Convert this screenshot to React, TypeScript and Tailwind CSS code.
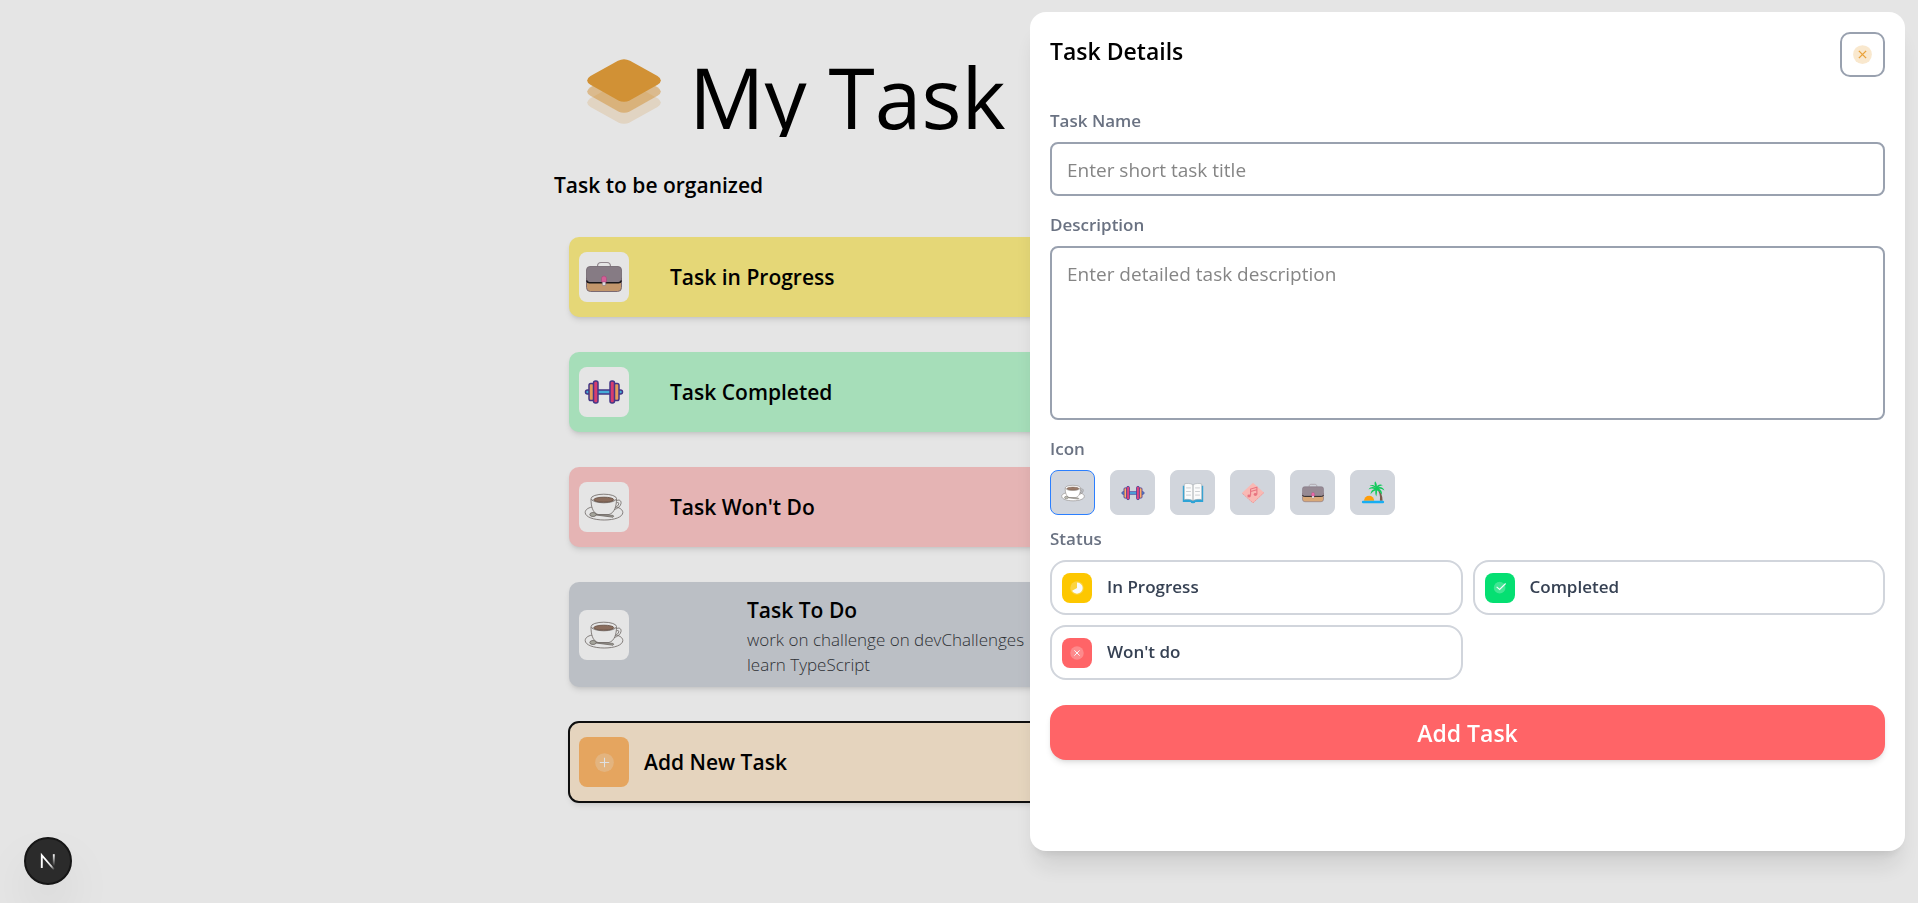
import { useState } from "react";
import type { ReactNode } from "react";

type IconProps = { className?: string };

function LogoIcon({ className }: IconProps) {
  const layer =
    "M92 5Q110 -4 128 5L210 51Q230 64 210 77L128 123Q110 132 92 123L10 77Q-10 64 10 51Z";
  return (
    <svg className={className} viewBox="0 0 220 194" fill="#E9A23B" aria-hidden="true">
      <path d={layer} transform="translate(0 66)" opacity="0.2" />
      <path d={layer} transform="translate(0 33)" opacity="0.5" />
      <path d={layer} />
    </svg>
  );
}

function BriefcaseIcon({ className }: IconProps) {
  return (
    <svg className={className} viewBox="0 0 40 40" fill="none" aria-hidden="true">
      <path d="M13.5 9.500c0-3 1.500-4 3.500-4h6c2 0 3.500 1 3.500 4" stroke="#a3989f" strokeWidth="1.200" />
      <path d="M2.500 21h35v9.500a4 4 0 0 1-4 4h-27a4 4 0 0 1-4-4z" fill="#d8a878" stroke="#8a7680" />
      <path
        d="M6 9.500h28a3.500 3.500 0 0 1 3.500 3.500v9.500a3 3 0 0 1-3 3h-29a3 3 0 0 1-3-3V13A3.500 3.500 0 0 1 6 9.500z"
        fill="#968a94"
        stroke="#7c6e7a"
        strokeWidth="0.800"
      />
      <path d="M2.500 23.500c.5 1.500 1.500 2.200 3 2.200h29c1.500 0 2.500-.7 3-2.200" stroke="#1c1a1f" strokeWidth="1.400" />
      <rect x="18.300" y="23.500" width="3.400" height="5" rx="1" fill="#f7f3f6" stroke="#7c6e7a" strokeWidth="0.500" />
      <path d="M17.500 21.500a2.500 2.500 0 0 1 5 0V25h-5z" fill="#ec69a8" stroke="#b04a80" strokeWidth="0.500" />
    </svg>
  );
}

function DumbbellIcon({ className }: IconProps) {
  return (
    <svg className={className} viewBox="0 0 40 40" stroke="#4c3d96" strokeWidth="1.500" aria-hidden="true">
      <rect x="1.500" y="18" width="37" height="4" rx="2" fill="#4cc0f0" />
      <rect x="5" y="11.500" width="5" height="17" rx="1.800" fill="#ffae66" />
      <rect x="30" y="11.500" width="5" height="17" rx="1.800" fill="#ffae66" />
      <rect x="9.500" y="9" width="4.500" height="22" rx="2" fill="#f0437c" />
      <rect x="26" y="9" width="4.500" height="22" rx="2" fill="#f0437c" />
    </svg>
  );
}

function CoffeeIcon({ className }: IconProps) {
  return (
    <svg
      className={className}
      viewBox="0 0 40 40"
      fill="#ffffff"
      stroke="#77706c"
      strokeWidth="0.800"
      strokeLinejoin="round"
      aria-hidden="true"
    >
      <path d="M8 20C3.500 21 1.200 23 1.200 25.500c0 4.500 8.500 7.500 19 7.500s18.600-3 18.600-7.500c0-2.500-2.500-4.500-6.500-5.500z" />
      <path d="M32 14c3-2 5.500-.5 5 2.500s-3.500 5-7 6.200" fill="none" />
      <path d="M32.500 16c1.500-1 2.500-.5 2.200 1s-1.700 2.500-3.400 3.500" fill="none" />
      <path d="M7 12c0 7 1.500 14 7 15.500h11c5.500-1.500 7.500-8.500 7.500-15.500" />
      <ellipse cx="19.800" cy="11.500" rx="12.700" ry="4.300" />
      <ellipse cx="19.800" cy="12.700" rx="10" ry="2.500" fill="#9a7a68" stroke="#6b5244" />
      <ellipse cx="9" cy="27.500" rx="3.200" ry="2" fill="#b8b8ae" />
      <path d="M12 28l17 2.200c.8-.6.8-1.400 0-1.800L12 27.500" fill="#b8b8ae" />
    </svg>
  );
}

function BookIcon({ className }: IconProps) {
  return (
    <svg className={className} viewBox="0 0 40 40" fill="none" aria-hidden="true">
      <path d="M3 8h34v27H24a4 2 0 0 1-8 0H3z" fill="#2da3d6" />
      <path
        d="M20 6.500C16 3.500 9 3.500 5.500 5v26c4-1 11-.5 14.500 2 3.500-2.500 10.500-3 14.500-2V5C31 3.500 24 3.500 20 6.500z"
        fill="#fbfbfb"
        stroke="#a4abb0"
      />
      <path d="M20 6.500V33" stroke="#8d9499" strokeWidth="1.300" />
      <path
        d="M8.500 11.500h8M8.500 17.500h8M8.500 23.500h8M23.500 11.500h8M23.500 17.500h8M23.500 23.500h8"
        stroke="#bfc4c8"
        strokeWidth="1.300"
      />
    </svg>
  );
}

function MusicIcon({ className }: IconProps) {
  return (
    <svg className={className} viewBox="0 0 40 40" fill="none" aria-hidden="true">
      <path d="M20 3l18.500 16.500L20 37 1.500 20z" fill="#f9b9b4" />
      <path d="M2.500 21L20 36.500 38 19.500" stroke="#e98f90" strokeWidth="1.200" strokeDasharray="3 1.500" />
      <path d="M16 24V13.500l10.500-3V22M16 17.500l10.500-3" stroke="#e87480" strokeWidth="1.800" />
      <ellipse cx="13.500" cy="25" rx="2.900" ry="2.300" fill="#e87480" />
      <ellipse cx="24" cy="22.500" rx="2.900" ry="2.300" fill="#e87480" />
    </svg>
  );
}

function IslandIcon({ className }: IconProps) {
  return (
    <svg className={className} viewBox="0 0 40 40" fill="none" aria-hidden="true">
      <path d="M5 33a8.500 8.500 0 0 1 17 0z" fill="#ff9d0a" />
      <path d="M25.500 12c5 5 7 12 6 21h4.500c0-9-3-16-9.500-21z" fill="#7a5a4a" />
      <path
        d="M25 12c-4-3-9-3-12.500 2 4-2 7-2 10-.5-4 1-6.500 4-6.500 9 2-3.500 4.500-5.500 8-6.500-.5 3.500-.2 7 1.500 10 .8-4 1.500-7 1-10 3.500 1 6.500 3.500 8.500 7 .5-5-1.500-8.500-5-10 3 0 6 .5 9 3-1.500-5-6-7-10.500-5.500 2-2 4.500-3 8-3-4-3-8-1.500-10 1.500 0-3-.5-6-3-8.500-1.500 3-1 6 .5 8.500-2.500-2-6-3-9.500-1.500 4 .5 8 2 10.500 4.500z"
        fill="#12c95b"
      />
      <rect x="1.500" y="33" width="37" height="4" rx="2" fill="#18aef2" />
    </svg>
  );
}

function CloseRingIcon({ className, color }: IconProps & { color: string }) {
  return (
    <svg className={className} viewBox="0 0 24 24" fill="none" aria-hidden="true">
      <circle cx="12" cy="12" r="9" fill={color} fillOpacity="0.25" />
      <path d="M8.500 8.500l7 7M15.500 8.500l-7 7" stroke={color} strokeWidth="1.300" />
    </svg>
  );
}

function AddRingIcon({ className }: IconProps) {
  return (
    <svg className={className} viewBox="0 0 24 24" fill="none" aria-hidden="true">
      <circle cx="12" cy="12" r="9" fill="#F8FAFC" fillOpacity="0.25" />
      <path d="M12 7.500v9M16.500 12h-9" stroke="#F8FAFC" />
    </svg>
  );
}

function TimeIcon({ className }: IconProps) {
  return (
    <svg className={className} viewBox="0 0 24 24" fill="none" aria-hidden="true">
      <circle cx="12" cy="12" r="9" fill="#F8FAFC" fillOpacity="0.25" />
      <path d="M12 4.500A7.500 7.500 0 1 1 5.500 15.750L12 12z" fill="#F8FAFC" />
    </svg>
  );
}

function DoneIcon({ className }: IconProps) {
  return (
    <svg className={className} viewBox="0 0 24 24" fill="none" aria-hidden="true">
      <circle cx="11.500" cy="11.500" r="7.800" fill="#F8FAFC" fillOpacity="0.25" />
      <path d="M7.500 10.500l4 3.500 8-8" stroke="#F8FAFC" strokeWidth="1.500" />
    </svg>
  );
}

function FrameworkLogo({ className }: IconProps) {
  return (
    <svg className={className} viewBox="0 0 40 40" fill="none" aria-hidden="true">
      <defs>
        <linearGradient id="diag" x1="18" y1="20" x2="26" y2="29" gradientUnits="userSpaceOnUse">
          <stop stopColor="#fff" />
          <stop offset="0.600" stopColor="#fff" stopOpacity="0.800" />
          <stop offset="1" stopColor="#fff" stopOpacity="0" />
        </linearGradient>
        <linearGradient id="stem" x1="0" y1="13" x2="0" y2="25" gradientUnits="userSpaceOnUse">
          <stop stopColor="#fff" />
          <stop offset="1" stopColor="#fff" stopOpacity="0" />
        </linearGradient>
      </defs>
      <path d="M13.800 27V14.200L26.500 29" stroke="url(#diag)" strokeWidth="1.900" />
      <path d="M25.800 13.200v13" stroke="url(#stem)" strokeWidth="1.900" />
    </svg>
  );
}

const cards = [
  { title: "Task in Progress", color: "bg-yellow-200", icon: <BriefcaseIcon className="size-10" /> },
  { title: "Task Completed", color: "bg-green-200", icon: <DumbbellIcon className="size-10" /> },
  { title: "Task Won't Do", color: "bg-red-200", icon: <CoffeeIcon className="size-10" /> },
];

const taskIcons = [
  { name: "Coffee", icon: <CoffeeIcon className="size-6" /> },
  { name: "Exercise", icon: <DumbbellIcon className="size-6" /> },
  { name: "Reading", icon: <BookIcon className="size-6" /> },
  { name: "Music", icon: <MusicIcon className="size-6" /> },
  { name: "Work", icon: <BriefcaseIcon className="size-6" /> },
  { name: "Travel", icon: <IslandIcon className="size-6" /> },
];

const statuses = [
  { name: "In Progress", color: "bg-[#fdc700]", icon: <TimeIcon className="size-[18px]" /> },
  { name: "Completed", color: "bg-[#05df72]", icon: <DoneIcon className="size-[18px]" /> },
  { name: "Won't do", color: "bg-[#ff6467]", icon: <CloseRingIcon className="size-[18px]" color="#F8FAFC" /> },
];

function IconTile({ children, color = "bg-white" }: { children: ReactNode; color?: string }) {
  return (
    <span className={`flex size-[50px] shrink-0 items-center justify-center rounded-lg ${color}`}>
      {children}
    </span>
  );
}

function Board() {
  return (
    <main className="mx-auto flex w-full max-w-[810px] flex-col pt-[49px]">
      <header className="flex h-[88px] items-start gap-7 overflow-hidden pl-[33px]">
        <LogoIcon className="mt-[10px] h-[65px] w-[74px] shrink-0" />
        <h1 className="text-[84px] leading-[96px] whitespace-nowrap">My Task</h1>
      </header>
      <h2 className="mt-8 text-[21px] leading-8 font-semibold">Task to be organized</h2>
      <div className="mt-9 flex flex-col gap-[35px] px-[15px]">
        {cards.map((card) => (
          <article
            key={card.title}
            className={`flex h-20 items-center gap-[41px] rounded-[10px] px-[10px] shadow-md ${card.color}`}
          >
            <IconTile>{card.icon}</IconTile>
            <h3 className="text-[21px] leading-8 font-semibold">{card.title}</h3>
          </article>
        ))}
        <article className="flex items-center gap-[118px] rounded-[10px] bg-gray-300 p-[10px] shadow-md">
          <IconTile>
            <CoffeeIcon className="size-10" />
          </IconTile>
          <div>
            <h3 className="pt-[2px] text-[21px] leading-8 font-semibold">Task To Do</h3>
            <p className="mt-px text-[17px] leading-[25px] font-light text-[#33363b]">
              work on challenge on devChallenges
              <br />
              learn TypeScript
            </p>
          </div>
        </article>
        <button
          type="button"
          className="flex h-20 items-center gap-[15px] rounded-[10px] bg-orange-100 px-[10px] shadow-md outline-2 -outline-offset-1 outline-[#101010]"
        >
          <IconTile color="bg-orange-300">
            <AddRingIcon className="size-[25px]" />
          </IconTile>
          <span className="text-[21px] leading-8 font-semibold">Add New Task</span>
        </button>
      </div>
    </main>
  );
}

function TaskDetails() {
  const [selectedIcon, setSelectedIcon] = useState("Coffee");
  const labelClass = "block text-[17px] leading-5 font-semibold text-gray-500";

  return (
    <section
      aria-labelledby="details-title"
      className="fixed top-3 right-[13px] bottom-[52px] w-[875px] max-w-full overflow-y-auto rounded-2xl bg-white p-5 shadow-xl"
    >
      <div className="flex items-start justify-between">
        <h2 id="details-title" className="text-[23px] leading-[38px] font-semibold">
          Task Details
        </h2>
        <button
          type="button"
          aria-label="Close"
          className="flex size-[45px] items-center justify-center rounded-[10px] border-2 border-gray-400"
        >
          <CloseRingIcon className="size-[25px]" color="#E9A23B" />
        </button>
      </div>

      <label htmlFor="task-name" className={`mt-[34px] ${labelClass}`}>
        Task Name
      </label>
      <input
        id="task-name"
        type="text"
        placeholder="Enter short task title"
        className="mt-[11px] block h-[54px] w-full rounded-lg border-2 border-gray-400 px-[15px] pt-[2px] text-[19px] placeholder:text-[#858585]"
      />

      <label htmlFor="task-description" className={`mt-[19px] ${labelClass}`}>
        Description
      </label>
      <textarea
        id="task-description"
        placeholder="Enter detailed task description"
        className="mt-[11px] block h-[174px] w-full resize-none rounded-lg border-2 border-gray-400 px-[15px] py-3 text-[19px] leading-7 placeholder:text-[#858585]"
      />

      <p className={`mt-[19px] ${labelClass}`}>Icon</p>
      <div className="mt-[11px] flex flex-wrap gap-[15px]">
        {taskIcons.map(({ name, icon }) => (
          <button
            key={name}
            type="button"
            aria-label={name}
            aria-pressed={selectedIcon === name}
            onClick={() => setSelectedIcon(name)}
            className={`flex size-[45px] items-center justify-center rounded-lg border bg-gray-300 ${
              selectedIcon === name ? "border-[#2b7fff]" : "border-gray-300"
            }`}
          >
            {icon}
          </button>
        ))}
      </div>

      <p className={`mt-[14px] ${labelClass}`}>Status</p>
      <div className="mt-[11px] grid grid-cols-2 gap-[10px]">
        {statuses.map(({ name, color, icon }) => (
          <button
            key={name}
            type="button"
            className="flex h-[55px] items-center gap-[15px] rounded-2xl border-2 border-gray-300 px-[10px]"
          >
            <span className={`flex size-[30px] items-center justify-center rounded-lg ${color}`}>{icon}</span>
            <span className="pb-[2px] text-[17px] leading-6 font-semibold text-gray-700">{name}</span>
          </button>
        ))}
      </div>

      <button
        type="button"
        className="mt-[25px] h-[55px] w-full rounded-2xl bg-[#ff6467] pt-[2px] text-[23px] font-semibold text-white shadow-md"
      >
        Add Task
      </button>
    </section>
  );
}

export default function App() {
  return (
    <div className="min-h-screen bg-white font-['Open_Sans','Noto_Sans',sans-serif] text-black">
      <Board />
      <div className="fixed inset-0 bg-black/10" />
      <TaskDetails />
      <button
        type="button"
        aria-label="Open developer tools"
        className="fixed bottom-[18px] left-6 flex size-12 items-center justify-center rounded-full border-2 border-[#161616] bg-[#2b2b2b] shadow-2xl"
      >
        <FrameworkLogo className="size-10 shrink-0" />
      </button>
    </div>
  );
}
